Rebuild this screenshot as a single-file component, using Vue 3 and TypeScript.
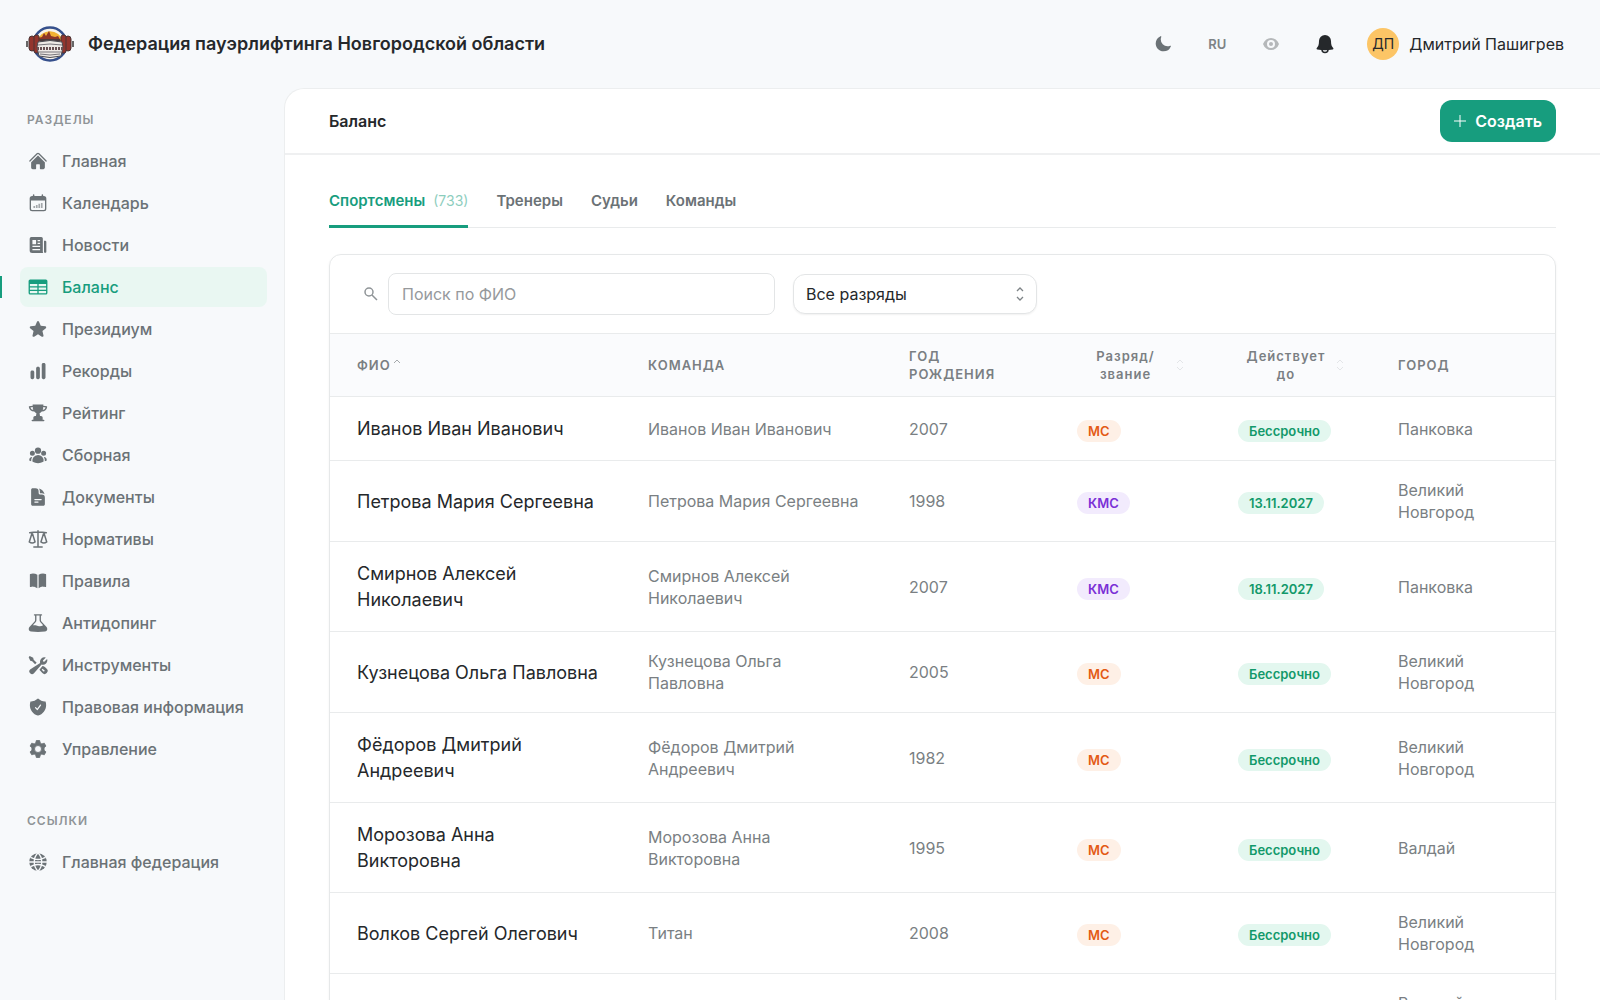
<script setup lang="ts">
import { ref } from 'vue'

interface NavItem {
  label: string
  icon: string
  active?: boolean
}

interface Athlete {
  name: string
  team: string
  year: string
  rank: string
  until: string
  city: string
}

// 24x24 icon shapes, filled with the current text colour
const icons: Record<string, string> = {
  home: '<path d="M11.47 3.841a.75.75 0 0 1 1.06 0l8.69 8.69a.75.75 0 1 0 1.06-1.061l-8.689-8.69a2.25 2.25 0 0 0-3.182 0l-8.69 8.69a.75.75 0 1 0 1.061 1.06l8.69-8.689Z"/><path d="m12 5.432 8.159 8.159c.03.03.06.058.091.086v6.198c0 1.035-.84 1.875-1.875 1.875H15a.75.75 0 0 1-.75-.75v-4.5a.75.75 0 0 0-.75-.75h-3a.75.75 0 0 0-.75.75V21a.75.75 0 0 1-.75.75H5.625a1.875 1.875 0 0 1-1.875-1.875v-6.198a2.29 2.29 0 0 0 .091-.086L12 5.432Z"/>',
  calendar: '<path fill-rule="evenodd" d="M6.750 1.500a.9.900 0 0 1 .9.900V3.500h8.700V2.400a.9.900 0 0 1 1.800 0V3.500h.850a3 3 0 0 1 3 3v12.500a3 3 0 0 1-3 3H5a3 3 0 0 1-3-3V6.500a3 3 0 0 1 3-3h.850V2.400a.9.900 0 0 1 .9-.9ZM3.600 9v10a1.500 1.500 0 0 0 1.500 1.500h13.800a1.500 1.500 0 0 0 1.500-1.500V9Z"/><path d="M6.500 15.500h2v2.500h-2zM9.500 14.500h2V18h-2zM12.500 13h2v5h-2zM15.500 12h2v6h-2z" opacity=".6"/>',
  news: '<path fill-rule="evenodd" d="M4 2.500h12a1.800 1.800 0 0 1 1.800 1.800V20a3 3 0 0 0 .5 1.600H5a3 3 0 0 1-3-3V4.500a2 2 0 0 1 2-2ZM5.300 6v5h4.400V6Zm6.200 0v1.500h3V6Zm0 3.300v1.500h3V9.300ZM5.300 13v1.500h9.200V13Zm0 3.700v1.500h9.200v-1.500Z"/><path d="M19.200 7h1.500A1.300 1.300 0 0 1 22 8.300V20a1.400 1.400 0 0 1-2.800 0Z"/>',
  table: '<path fill-rule="evenodd" d="M2.600 3h18.800A1.900 1.900 0 0 1 23.300 4.900v14.200a1.900 1.900 0 0 1-1.900 1.900H2.600a1.900 1.900 0 0 1-1.900-1.900V4.900A1.900 1.900 0 0 1 2.600 3ZM2.300 8.500v2.700h8.900V8.500Zm10.500 0v2.700h8.900V8.500ZM2.300 12.700v2.500h8.900v-2.500Zm10.500 0v2.500h8.900v-2.500ZM2.300 16.700v2.700h8.900v-2.700Zm10.500 0v2.700h8.900v-2.700Z"/>',
  star: '<path d="M10.788 3.21c.448-1.077 1.976-1.077 2.424 0l2.082 5.006 5.404.434c1.164.093 1.636 1.545.749 2.305l-4.117 3.527 1.257 5.273c.271 1.136-.964 2.033-1.960 1.425L12 18.354 7.373 21.180c-.996.608-2.231-.29-1.960-1.425l1.257-5.273-4.117-3.527c-.887-.76-.415-2.212.749-2.305l5.404-.434 2.082-5.005Z"/>',
  chart: '<path d="M18.375 2.250c-1.035 0-1.875.84-1.875 1.875v15.750c0 1.035.84 1.875 1.875 1.875h.75c1.035 0 1.875-.84 1.875-1.875V4.125c0-1.036-.84-1.875-1.875-1.875h-.75ZM9.750 8.625c0-1.036.84-1.875 1.875-1.875h.75c1.036 0 1.875.84 1.875 1.875v11.250c0 1.035-.84 1.875-1.875 1.875h-.75a1.875 1.875 0 0 1-1.875-1.875V8.625ZM3 13.125c0-1.036.84-1.875 1.875-1.875h.75c1.036 0 1.875.84 1.875 1.875v6.750c0 1.035-.84 1.875-1.875 1.875h-.75A1.875 1.875 0 0 1 3 19.875v-6.750Z"/>',
  trophy: '<path fill-rule="evenodd" d="M5.500 1.800h13l-.2 1.400c1.600.1 3 .4 4.300.8.300.1.500.4.400.8a6.500 6.500 0 0 1-6.500 5.300 7 7 0 0 1-2.600 2.100l.5 3.300h1.200a2 2 0 0 1 2 2v2.500h1.200a.9.900 0 0 1 0 1.800H5.200a.9.900 0 0 1 0-1.800h1.200v-2.500a2 2 0 0 1 2-2h1.200l.5-3.300a7 7 0 0 1-2.600-2.100A6.500 6.500 0 0 1 1 4.800c-.1-.4.1-.7.400-.8 1.300-.4 2.700-.7 4.300-.8ZM2.800 5.300a5 5 0 0 0 3.500 3 9 9 0 0 1-.6-3.500c-1 .1-2 .3-2.900.5Zm18.400 0c-.9-.2-1.900-.4-2.900-.5a9 9 0 0 1-.6 3.500 5 5 0 0 0 3.500-3Z"/>',
  group: '<path d="M8.250 6.750a3.750 3.750 0 1 1 7.500 0 3.750 3.750 0 0 1-7.500 0ZM15.750 9.750a3 3 0 1 1 6 0 3 3 0 0 1-6 0ZM2.250 9.750a3 3 0 1 1 6 0 3 3 0 0 1-6 0ZM6.310 15.117A6.745 6.745 0 0 1 12 12a6.745 6.745 0 0 1 6.709 7.498.75.75 0 0 1-.372.568A12.696 12.696 0 0 1 12 21.750c-2.305 0-4.470-.612-6.337-1.684a.75.75 0 0 1-.372-.568 6.787 6.787 0 0 1 1.019-4.380Z"/><path d="M5.082 14.254a8.287 8.287 0 0 0-1.308 5.135 9.687 9.687 0 0 1-1.764-.44l-.115-.04a.563.563 0 0 1-.373-.487l-.01-.121a3.750 3.750 0 0 1 3.570-4.047ZM20.226 19.389a8.287 8.287 0 0 0-1.308-5.135 3.750 3.750 0 0 1 3.570 4.047l-.01.121a.563.563 0 0 1-.373.486l-.115.04c-.567.2-1.156.349-1.764.441Z"/>',
  document: '<path fill-rule="evenodd" d="M5.625 1.500c-1.036 0-1.875.84-1.875 1.875v17.250c0 1.035.84 1.875 1.875 1.875h12.750c1.035 0 1.875-.84 1.875-1.875V12.750A3.750 3.750 0 0 0 16.500 9h-1.875a1.875 1.875 0 0 1-1.875-1.875V5.250A3.750 3.750 0 0 0 9 1.500H5.625ZM7.500 15a.75.75 0 0 1 .75-.75h7.500a.75.75 0 0 1 0 1.500h-7.500A.75.75 0 0 1 7.500 15Zm.75 2.250a.75.75 0 0 0 0 1.500H12a.75.75 0 0 0 0-1.500H8.250Z"/><path d="M12.971 1.816A5.230 5.230 0 0 1 14.250 5.250v1.875c0 .207.168.375.375.375H16.500a5.230 5.230 0 0 1 3.434 1.279 9.768 9.768 0 0 0-6.963-6.963Z"/>',
  scale: '<g fill="none" stroke="currentColor" stroke-width="1.800" stroke-linecap="round" stroke-linejoin="round"><path d="M12 2v19M7 21.500h10M2 4.500c3.500-.2 7-1 10-1s6.500.8 10 1M5 4.500 1.500 15.500c2 1.500 5 1.500 7 0L5 4.500ZM19 4.500l-3.500 11c2 1.500 5 1.500 7 0L19 4.500Z"/></g>',
  book: '<path d="M11.250 4.533A9.707 9.707 0 0 0 6 3a9.735 9.735 0 0 0-3.250.555.75.75 0 0 0-.5.707v14.250a.75.75 0 0 0 1 .707A8.237 8.237 0 0 1 6 18.750c1.995 0 3.823.707 5.250 1.886V4.533ZM12.750 20.636A8.214 8.214 0 0 1 18 18.750c.966 0 1.890.166 2.750.47a.75.75 0 0 0 1-.708V4.262a.75.75 0 0 0-.5-.707A9.735 9.735 0 0 0 18 3a9.707 9.707 0 0 0-5.250 1.533v16.103Z"/>',
  flask: '<path fill-rule="evenodd" d="M7.800 1.500h8.400a.8.800 0 0 1 0 1.600h-.7v5.600c0 .5.200 1 .6 1.400l5.900 6.400c2.200 2.400.9 5.300-1.700 5.700-5.500.8-11.100.8-16.600 0-2.600-.4-3.900-3.300-1.700-5.700l5.900-6.400c.4-.4.600-.9.600-1.400V3.100h-.7a.8.800 0 0 1 0-1.600Zm2.300 1.600v5.600c0 .9-.3 1.800-1 2.500l-3.300 3.600c3-.6 4.400.2 6.200.8 2 .7 4 .6 6.200-.8l-3.300-3.600a3.600 3.600 0 0 1-1-2.500V3.100Z"/>',
  tools: '<path d="M14.600 9.500a5.300 5.300 0 0 1 6.800-6.400L17.900 6.600c.1.900.7 1.500 1.600 1.600l3.400-3.500a5.300 5.300 0 0 1-6.600 6.700L7.200 21.800a3.200 3.200 0 0 1-4.700-4.500Z"/><path d="M2 1.300 6.200 3.300l.6 2.300 3.600 3.600-1.900 1.900L5 7.500l-2.300-.6L.8 2.600ZM13.700 17.800l3.700-4.500c2 .4 2.700.9 5 3.100a3.700 3.700 0 0 1-5.200 5.300Z"/><path class="bore" d="m17 17 2.600 2.600"/>',
  shield: '<path fill-rule="evenodd" d="M12.516 2.170a.75.75 0 0 0-1.032 0 11.209 11.209 0 0 1-7.877 3.080.75.75 0 0 0-.722.515A12.740 12.740 0 0 0 2.250 9.750c0 5.942 4.064 10.933 9.563 12.348a.749.749 0 0 0 .374 0c5.499-1.415 9.563-6.406 9.563-12.348 0-1.390-.223-2.730-.635-3.985a.75.75 0 0 0-.722-.516l-.143.001c-2.996 0-5.717-1.170-7.734-3.080Zm3.094 8.016a.75.75 0 1 0-1.220-.872l-3.236 4.530L9.530 12.220a.75.75 0 0 0-1.060 1.060l2.250 2.250a.75.75 0 0 0 1.140-.094l3.750-5.250Z"/>',
  gear: '<path fill-rule="evenodd" d="M10 1.800h4l.7 3 1.900 1.100 2.900-.9 2 3.500-2.200 2.100v2.800l2.200 2.100-2 3.500-2.900-.9-1.900 1.100-.7 3h-4l-.7-3-1.900-1.100-2.900.9-2-3.500 2.200-2.100v-2.800L2.500 8.500l2-3.500 2.900.9 1.900-1.100Zm2 6a4.200 4.200 0 1 0 0 8.400 4.200 4.200 0 0 0 0-8.400Z" stroke="currentColor" stroke-width="1" stroke-linejoin="round"/>',
  globe: '<circle cx="12" cy="12" r="10.500"/><path class="mesh" d="M1 12h22M3 6.500c5.500 3 12.500 3 18 0M3 17.500c5.500-3 12.500-3 18 0M12 1c-6 6-6 16 0 22M12 1c6 6 6 16 0 22"/>',
}

const sections: NavItem[] = [
  { label: 'Главная', icon: 'home' },
  { label: 'Календарь', icon: 'calendar' },
  { label: 'Новости', icon: 'news' },
  { label: 'Баланс', icon: 'table', active: true },
  { label: 'Президиум', icon: 'star' },
  { label: 'Рекорды', icon: 'chart' },
  { label: 'Рейтинг', icon: 'trophy' },
  { label: 'Сборная', icon: 'group' },
  { label: 'Документы', icon: 'document' },
  { label: 'Нормативы', icon: 'scale' },
  { label: 'Правила', icon: 'book' },
  { label: 'Антидопинг', icon: 'flask' },
  { label: 'Инструменты', icon: 'tools' },
  { label: 'Правовая информация', icon: 'shield' },
  { label: 'Управление', icon: 'gear' },
]

const links: NavItem[] = [{ label: 'Главная федерация', icon: 'globe' }]

const tabs = ['Спортсмены', 'Тренеры', 'Судьи', 'Команды']
const activeTab = ref('Спортсмены')
const query = ref('')
const rankFilter = ref('all')

const athletes: Athlete[] = [
  { name: 'Иванов Иван Иванович', team: 'Иванов Иван Иванович', year: '2007', rank: 'МС', until: 'Бессрочно', city: 'Панковка' },
  { name: 'Петрова Мария Сергеевна', team: 'Петрова Мария Сергеевна', year: '1998', rank: 'КМС', until: '13.11.2027', city: 'Великий Новгород' },
  { name: 'Смирнов Алексей Николаевич', team: 'Смирнов Алексей Николаевич', year: '2007', rank: 'КМС', until: '18.11.2027', city: 'Панковка' },
  { name: 'Кузнецова Ольга Павловна', team: 'Кузнецова Ольга Павловна', year: '2005', rank: 'МС', until: 'Бессрочно', city: 'Великий Новгород' },
  { name: 'Фёдоров Дмитрий Андреевич', team: 'Фёдоров Дмитрий Андреевич', year: '1982', rank: 'МС', until: 'Бессрочно', city: 'Великий Новгород' },
  { name: 'Морозова Анна Викторовна', team: 'Морозова Анна Викторовна', year: '1995', rank: 'МС', until: 'Бессрочно', city: 'Валдай' },
  { name: 'Волков Сергей Олегович', team: 'Титан', year: '2008', rank: 'МС', until: 'Бессрочно', city: 'Великий Новгород' },
  { name: '', team: '', year: '', rank: '', until: '', city: 'Великий Новгород' },
]
</script>

<template>
  <div class="shell">
    <header class="topbar">
      <a class="brand" href="#">
        <svg class="logo" viewBox="0 0 48 36" aria-hidden="true">
          <circle cx="24" cy="18" r="16.500" fill="#f7f3ea" stroke="#35508c" stroke-width="2.500" />
          <path d="M11 15a13.500 13.500 0 0 1 26 0Z" fill="#f2b233" />
          <path d="M12 15v-3l4-1 2-4 2 3 3-5 2 5 4 1 3-1 3 5Z" fill="#8d3527" />
          <path d="M14 13h20v3H14z" fill="#4b3a3c" />
          <g fill="#93352d" stroke="#4a3434" stroke-width="1">
            <rect x="3" y="10" width="6" height="15" rx="3" />
            <rect x="8" y="9" width="5" height="18" rx="2" />
            <rect x="39" y="10" width="6" height="15" rx="3" />
            <rect x="35" y="9" width="5" height="18" rx="2" />
          </g>
          <path d="M1 15v6M47 15v6" stroke="#666" stroke-width="2" />
          <path d="M12 16q12-3 24 0l1 5-2 9q-11 3-22 0l-2-9Z" fill="#eeeae6" stroke="#4a4a50" stroke-width="1" />
          <path d="M12 19q12-2 24 0M13 26h22M14 28q10 2 20 0" fill="none" stroke="#77757a" stroke-width="1" />
          <path d="M11 22.500h26" stroke="#685153" stroke-width="3" stroke-dasharray="2 1" />
        </svg>
        <span class="brand-name">Федерация пауэрлифтинга Новгородской области</span>
      </a>

      <div class="tools">
        <button class="tool" type="button" aria-label="Тёмная тема">
          <svg class="moon" viewBox="0 0 24 24"><path d="M9.528 1.718a.75.75 0 0 1 .162.819A8.970 8.970 0 0 0 9 6a9 9 0 0 0 9 9 8.970 8.970 0 0 0 3.463-.69.75.75 0 0 1 .981.98 10.503 10.503 0 0 1-9.694 6.460c-5.799 0-10.500-4.700-10.500-10.500 0-4.368 2.667-8.112 6.460-9.694a.75.75 0 0 1 .818.162Z" /></svg>
        </button>
        <button class="tool lang" type="button">RU</button>
        <button class="tool" type="button" aria-label="Версия для слабовидящих">
          <svg class="eye" viewBox="0 0 16 16"><path fill-rule="evenodd" d="M8 2c3.500 0 6.500 2 8 6-1.500 4-4.500 6-8 6S1.500 12 0 8c1.500-4 4.500-6 8-6Zm0 2a4 4 0 1 0 0 8 4 4 0 0 0 0-8Z" /><circle cx="8" cy="8" r="2" /></svg>
        </button>
        <button class="tool" type="button" aria-label="Уведомления">
          <svg class="bell" viewBox="0 0 18 20"><path d="M9 1a6 6 0 0 1 6 6c0 4 .8 5.500 2.200 7 .5.600.2 1.300-.5 1.500-5 1-10.400 1-15.400 0-.7-.2-1-.9-.5-1.500C2.200 12.500 3 11 3 7a6 6 0 0 1 6-6Z" /><path d="M6 15.500a3 3 0 0 0 6 0" fill="none" stroke="currentColor" stroke-width="1.500" /></svg>
        </button>
        <button class="user" type="button">
          <span class="avatar">ДП</span>
          <span>Дмитрий Пашигрев</span>
        </button>
      </div>
    </header>

    <aside class="sidebar">
      <nav aria-label="Разделы">
        <h2 class="nav-title">Разделы</h2>
        <ul class="nav-list">
          <li v-for="item in sections" :key="item.label">
            <a class="nav-link" :class="{ active: item.active }" href="#">
              <svg class="nav-icon" viewBox="0 0 24 24" aria-hidden="true" v-html="icons[item.icon]" />
              {{ item.label }}
            </a>
          </li>
        </ul>
      </nav>
      <nav aria-label="Ссылки">
        <h2 class="nav-title">Ссылки</h2>
        <ul class="nav-list">
          <li v-for="item in links" :key="item.label">
            <a class="nav-link" href="#">
              <svg class="nav-icon" viewBox="0 0 24 24" aria-hidden="true" v-html="icons[item.icon]" />
              {{ item.label }}
            </a>
          </li>
        </ul>
      </nav>
    </aside>

    <main class="panel">
      <div class="page-head">
        <h1>Баланс</h1>
        <button class="create" type="button">
          <svg viewBox="0 0 12 12" aria-hidden="true"><path d="M6 0v12M0 6h12" /></svg>
          Создать
        </button>
      </div>

      <div class="content">
        <div class="tabs" role="tablist">
          <button
            v-for="tab in tabs"
            :key="tab"
            class="tab"
            :class="{ active: tab === activeTab }"
            type="button"
            role="tab"
            :aria-selected="tab === activeTab"
            @click="activeTab = tab"
          >
            {{ tab }}<span v-if="tab === 'Спортсмены'" class="count">(733)</span>
          </button>
        </div>

        <section class="card">
          <div class="filters">
            <label class="search">
              <svg viewBox="0 0 14 14" aria-hidden="true"><circle cx="5" cy="5" r="4" /><path d="m8 8 5 5" /></svg>
              <input v-model="query" type="text" placeholder="Поиск по ФИО" aria-label="Поиск по ФИО" />
            </label>
            <div class="select">
              <select v-model="rankFilter" aria-label="Разряд">
                <option value="all">Все разряды</option>
                <option value="ms">МС</option>
                <option value="kms">КМС</option>
              </select>
              <svg viewBox="0 0 8 14" aria-hidden="true"><path d="m1 4 3-3 3 3M1 10l3 3 3-3" /></svg>
            </div>
          </div>

          <table>
            <colgroup>
              <col class="c-name" />
              <col class="c-team" />
              <col class="c-year" />
              <col class="c-rank" />
              <col class="c-until" />
              <col class="c-city" />
            </colgroup>
            <thead>
              <tr>
                <th>
                  <button class="sort asc" type="button">ФИО<svg viewBox="0 0 8 14" aria-hidden="true"><path d="m1 5 3-3 3 3" /></svg></button>
                </th>
                <th>КОМАНДА</th>
                <th>ГОД РОЖДЕНИЯ</th>
                <th>
                  <button class="sort" type="button"><span>Разряд/<br />звание</span><svg viewBox="0 0 8 14" aria-hidden="true"><path d="m1 5 3-3 3 3M1 9l3 3 3-3" /></svg></button>
                </th>
                <th>
                  <button class="sort" type="button"><span>Действует до</span><svg viewBox="0 0 8 14" aria-hidden="true"><path d="m1 5 3-3 3 3M1 9l3 3 3-3" /></svg></button>
                </th>
                <th>ГОРОД</th>
              </tr>
            </thead>
            <tbody>
              <tr v-for="(athlete, index) in athletes" :key="index">
                <td class="name">{{ athlete.name }}</td>
                <td>{{ athlete.team }}</td>
                <td>{{ athlete.year }}</td>
                <td class="tag-cell">
                  <span v-if="athlete.rank" class="tag" :class="athlete.rank === 'КМС' ? 'purple' : 'orange'">{{ athlete.rank }}</span>
                </td>
                <td class="tag-cell">
                  <span v-if="athlete.until" class="tag green">{{ athlete.until }}</span>
                </td>
                <td>{{ athlete.city }}</td>
              </tr>
            </tbody>
          </table>
        </section>
      </div>
    </main>
  </div>
</template>

<style>
body {
  background: #f7f9fb;
}
</style>

<style scoped>
* {
  box-sizing: border-box;
}

.shell {
  display: grid;
  grid-template-columns: 284px minmax(0, 1fr);
  grid-template-rows: 88px minmax(0, 1fr);
  height: 100vh;
  overflow: hidden;
  background: #f7f9fb;
  color: #25282b;
  font-family: Inter, "Liberation Sans", sans-serif;
  font-size: 16px;
  line-height: 24px;
}

button,
input,
select {
  font: inherit;
  color: inherit;
}

button {
  padding: 0;
  border: 0;
  background: none;
  cursor: pointer;
}

a {
  color: inherit;
  text-decoration: none;
}

svg {
  flex: none;
}

.topbar {
  grid-column: 1 / -1;
  display: flex;
  align-items: center;
  justify-content: space-between;
  padding: 0 36px 0 26px;
}

.brand {
  display: flex;
  align-items: center;
  gap: 14px;
}

.logo {
  width: 48px;
  height: 36px;
}

.brand-name {
  font-size: 18px;
  font-weight: 600;
}

.tools {
  display: flex;
  align-items: center;
  gap: 26px;
}

.tool {
  display: grid;
  place-items: center;
  width: 28px;
  height: 28px;
  color: #25282b;
}

.tool svg {
  fill: currentColor;
}

.tool .moon {
  width: 18px;
  height: 18px;
  color: #6b7276;
}

.tool.lang {
  color: #7d8386;
  font-size: 13px;
  font-weight: 600;
}

.tool .eye {
  width: 16px;
  height: 16px;
  color: #b5b8ba;
}

.bell {
  width: 18px;
  height: 20px;
}

.user {
  display: flex;
  align-items: center;
  gap: 10px;
  padding-left: 2px;
  font-weight: 400;
}

.avatar {
  display: grid;
  place-items: center;
  width: 32px;
  height: 32px;
  border-radius: 50%;
  background: #fcc566;
  font-size: 14px;
}

.sidebar {
  display: flex;
  flex-direction: column;
  gap: 40px;
  padding: 20px 17px 20px 20px;
}

.nav-title {
  margin: 0 0 9px;
  padding-left: 7px;
  color: #8f9497;
  font-size: 12px;
  font-weight: 600;
  letter-spacing: 1px;
  line-height: 24px;
  text-transform: uppercase;
}

.nav-list {
  display: flex;
  flex-direction: column;
  gap: 2px;
  margin: 0;
  padding: 0;
  list-style: none;
}

.nav-link {
  position: relative;
  display: flex;
  align-items: center;
  gap: 14px;
  height: 40px;
  padding: 0 8px;
  border-radius: 8px;
  color: #6b7276;
  font-weight: 500;
}

.nav-link.active {
  background: #e9f7f2;
  color: #179d7e;
}

.nav-link.active::before {
  content: "";
  position: absolute;
  left: -20px;
  width: 2px;
  height: 22px;
  background: #179d7e;
}

.nav-icon {
  width: 20px;
  height: 20px;
  fill: currentColor;
}

.nav-icon :deep(.mesh),
.nav-icon :deep(.bore) {
  fill: none;
  stroke: #f7f9fb;
  stroke-width: 1.600;
}

.panel {
  overflow: hidden;
  border: 1px solid #eceeef;
  border-width: 1px 0 0 1px;
  border-top-left-radius: 20px;
  background: #fff;
}

.page-head {
  display: flex;
  align-items: center;
  justify-content: space-between;
  height: 66px;
  padding: 0 44px;
  border-bottom: 2px solid #eff0f1;
}

.page-head h1 {
  margin: 0;
  font-size: 16px;
  font-weight: 600;
}

.create {
  display: flex;
  align-items: center;
  gap: 9px;
  height: 42px;
  padding: 0 14px;
  border-radius: 12px;
  background: #179d7e;
  color: #fff;
  font-weight: 600;
}

.create svg {
  width: 12px;
  height: 12px;
  stroke: currentColor;
  stroke-width: 1;
}

.content {
  display: flex;
  flex-direction: column;
  gap: 26px;
  padding: 26px 44px;
}

.tabs {
  display: flex;
  gap: 28px;
  height: 47px;
  border-bottom: 1px solid #e9ebec;
}

.tab {
  display: flex;
  align-items: center;
  gap: 8px;
  height: 47px;
  padding-bottom: 4px;
  border-bottom: 3px solid transparent;
  color: #6b7276;
  font-size: 15px;
  font-weight: 600;
}

.tab.active {
  border-bottom-color: #179d7e;
  color: #179d7e;
}

.count {
  font-size: 14px;
  font-weight: 400;
  opacity: 0.5;
}

.card {
  overflow: hidden;
  border: 1px solid #e6e8e9;
  border-radius: 12px;
  box-shadow: 0 1px 3px #0000000d;
}

.filters {
  display: flex;
  align-items: center;
  gap: 18px;
  padding: 18px 34px;
}

.search {
  display: flex;
  align-items: center;
  gap: 10px;
  width: 411px;
}

.search svg {
  width: 14px;
  height: 14px;
  fill: none;
  stroke: #8f9497;
  stroke-width: 1.500;
}

.search input {
  flex: 1;
  min-width: 0;
  height: 42px;
  padding: 0 13px;
  border: 1px solid #e3e5e6;
  border-radius: 8px;
  background: #fff;
}

.search input::placeholder {
  color: #96999c;
  opacity: 1;
}

.select {
  position: relative;
  width: 244px;
}

.select select {
  display: block;
  width: 100%;
  height: 40px;
  padding: 0 32px 0 12px;
  border: 1px solid #e3e5e6;
  border-radius: 12px;
  background: #fff;
  box-shadow: 0 1px 2px #0000000f;
  appearance: none;
}

.select svg {
  position: absolute;
  top: 13px;
  right: 13px;
  width: 8px;
  height: 14px;
  fill: none;
  stroke: #7d8386;
  stroke-width: 1.300;
  pointer-events: none;
}

table {
  width: 100%;
  border-collapse: separate;
  border-spacing: 0;
  table-layout: fixed;
}

.c-name {
  width: 291px;
}

.c-team {
  width: 261px;
}

.c-year {
  width: 168px;
}

.c-rank {
  width: 161px;
}

.c-until {
  width: 160px;
}

.c-city {
  width: 184px;
}

th {
  height: 64px;
  padding: 0 27px;
  border: 1px solid #e9ebec;
  border-width: 1px 0;
  background: #fafbfd;
  color: #7a7f83;
  font-size: 13px;
  font-weight: 600;
  letter-spacing: 1px;
  line-height: 18px;
  text-align: left;
}

.sort {
  display: flex;
  align-items: center;
  gap: 2px;
  width: 100%;
  letter-spacing: inherit;
}

.sort span {
  flex: 1;
  text-align: center;
}

.sort svg {
  width: 8px;
  height: 14px;
  fill: none;
  stroke: #e3e5e8;
  stroke-width: 1;
}

.sort.asc svg {
  stroke: #a5a9ac;
}

td {
  padding: 18px 22px 18px 27px;
  border-bottom: 1px solid #e9ebec;
  color: #7a7f83;
  line-height: 22px;
}

td.name {
  padding-top: 19px;
  color: #25282b;
  font-size: 18px;
  line-height: 26px;
}

td.tag-cell {
  padding-top: 22px;
}

.tag {
  display: block;
  width: fit-content;
  padding: 0 11px;
  border-radius: 11px;
  font-size: 13px;
  font-weight: 600;
  line-height: 22px;
  white-space: nowrap;
}

.orange {
  background: #fef0e6;
  color: #e35a14;
}

.purple {
  background: #f2ebfd;
  color: #7a2fd6;
}

.green {
  background: #e3f7ef;
  color: #12996a;
}
</style>
